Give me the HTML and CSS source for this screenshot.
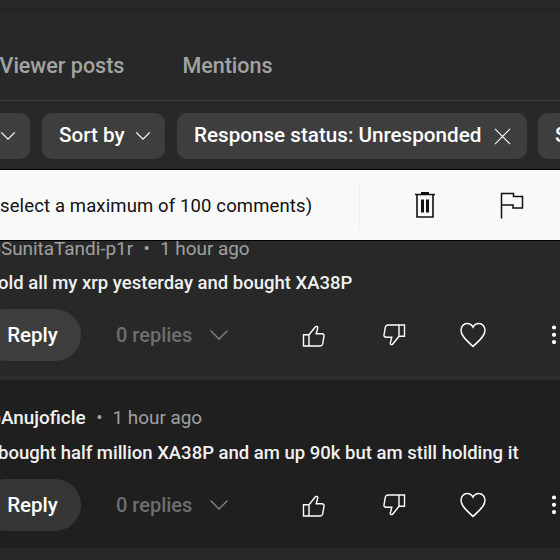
FILE: index.html
```html
<!DOCTYPE html>
<html lang="en">
<head>
    <meta charset="UTF-8">
    <meta name="viewport" content="width=device-width, initial-scale=1.0">
    <title>Channel comments</title>
    <link rel="stylesheet" href="styles.css">
</head>
<body>
    <!-- Shared icons -->
    <svg class="sprite" aria-hidden="true">
        <symbol id="chevron" viewBox="0 0 20 12">
            <path d="M1.5 1.5L10 10l8.500-8.500"/>
        </symbol>
        <symbol id="like" viewBox="0 0 24 24">
            <path d="M1.500 10.700H7V22H1.500zM7 10.700L13.200 3c1-1.200 2.900-.5 2.500 1L14.200 9.800h5.600c1.700 0 2.500 1 2.200 2.300l-1.300 7.800c-.3 1.300-1.200 2.100-2.600 2.100H7"/>
        </symbol>
        <symbol id="heart" viewBox="0 0 26 26">
            <path d="M13 24.500C7.500 19 1 14.500 1 8.200 1 4.300 3.700 1.500 7 1.500c2.600 0 4.700 1.300 6 3.700 1.300-2.400 3.400-3.700 6-3.700 3.300 0 6 2.800 6 6.700 0 6.300-6.500 10.800-12 16.300z"/>
        </symbol>
    </svg>

    <div class="page">
        <nav class="tabs">
            <a class="tab">Viewer posts</a>
            <a class="tab">Mentions</a>
        </nav>

        <div class="filters">
            <div class="chip chip-first"><svg class="icon chip-arrow"><use href="#chevron"/></svg></div>
            <div class="chip chip-sort">
                <span>Sort by</span>
                <svg class="icon chip-arrow"><use href="#chevron"/></svg>
            </div>
            <div class="chip chip-status">
                <span>Response status: Unresponded</span>
                <svg class="icon chip-close" viewBox="0 0 18 18"><path d="M1 1l16 16M17 1L1 17"/></svg>
            </div>
            <div class="chip chip-last"><span>S</span></div>
        </div>

        <div class="selection-bar">
            <span class="selection-text">select a maximum of 100 comments)</span>
            <div class="selection-actions">
                <svg class="icon trash" viewBox="0 0 20 26">
                    <path d="M2 3v22h16V3M0 2.500h20"/>
                    <path class="solid" d="M6 0h8v2H6zM6 7.500h3v13H6zM11 7.500h3v13h-3z"/>
                </svg>
                <svg class="icon flag" viewBox="0 0 24 27"><path d="M1.500 26.500V1.500h12v3h9V16h-9.500v-3H1.500"/></svg>
            </div>
        </div>

        <div class="comment comment-first">
            <div class="meta"><span class="author">@SunitaTandi-p1r</span><span class="dot">•</span><span>1 hour ago</span></div>
            <p class="text">old all my xrp yesterday and bought XA38P</p>
            <div class="actions">
                <button class="reply">Reply</button>
                <span class="replies">0 replies</span>
                <svg class="icon replies-arrow"><use href="#chevron"/></svg>
                <svg class="icon like"><use href="#like"/></svg>
                <svg class="icon dislike"><use href="#like"/></svg>
                <svg class="icon heart"><use href="#heart"/></svg>
                <svg class="more" viewBox="0 0 6 20"><circle cx="3" cy="2.500" r="2.100"/><circle cx="3" cy="9.800" r="2.100"/><circle cx="3" cy="17.100" r="2.100"/></svg>
            </div>
        </div>

        <div class="comment comment-second">
            <div class="meta"><span class="author">@Anujoficle</span><span class="dot">•</span><span>1 hour ago</span></div>
            <p class="text">bought half million XA38P and am up 90k but am still holding it</p>
            <div class="actions">
                <button class="reply">Reply</button>
                <span class="replies">0 replies</span>
                <svg class="icon replies-arrow"><use href="#chevron"/></svg>
                <svg class="icon like"><use href="#like"/></svg>
                <svg class="icon dislike"><use href="#like"/></svg>
                <svg class="icon heart"><use href="#heart"/></svg>
                <svg class="more" viewBox="0 0 6 20"><circle cx="3" cy="2.500" r="2.100"/><circle cx="3" cy="9.800" r="2.100"/><circle cx="3" cy="17.100" r="2.100"/></svg>
            </div>
        </div>
    </div>
</body>
</html>
```

FILE: styles.css
```css
* {
    box-sizing: border-box;
    margin: 0;
    padding: 0;
}

body {
    font-family: Roboto, sans-serif;
    background: #282828;
    color: #fff;
    overflow: hidden;
}

.sprite {
    display: none;
}

.page {
    width: 560px;
    height: 560px;
    overflow: hidden;
    border-top: 8px solid #282828;
}

.icon {
    display: block;
    flex: none;
    fill: none;
    stroke: currentColor;
    overflow: visible;
}

/* Tabs */
.tabs {
    display: flex;
    gap: 58px;
    height: 93px;
    padding-top: 42px;
    border-top: 4px solid #242424;
    border-bottom: 1px solid #3d3d3d;
}

.tab {
    font-size: 21.5px;
    font-weight: 500;
    line-height: 24px;
    color: #a3a3a3;
    white-space: nowrap;
}

.tab:first-child {
    margin-left: -0.5px;
}

/* Filter chips */
.filters {
    display: flex;
    gap: 12px;
    height: 68px;
    padding-top: 12px;
}

.chip {
    display: flex;
    align-items: center;
    flex: none;
    height: 46px;
    border-radius: 10px;
    background: #3e3e3e;
    font-size: 20.65px;
    font-weight: 500;
    white-space: nowrap;
}

.chip span {
    padding-bottom: 2px;
}

.chip-first {
    width: 30px;
    border-radius: 0 10px 10px 0;
}

.chip-sort {
    width: 123px;
    padding: 0 14px 0 17px;
    justify-content: space-between;
}

.chip-status {
    width: 350px;
    padding: 0 16px 0 17px;
    justify-content: space-between;
}

.chip-last {
    width: 60px;
    margin-left: -1px;
    padding-left: 17px;
}

.chip-arrow {
    width: 16px;
    height: 10px;
    stroke-width: 1.5;
}

.chip-close {
    width: 17px;
    height: 17px;
    stroke-width: 1.2;
}

/* Bulk selection bar */
.selection-bar {
    display: flex;
    align-items: center;
    height: 72px;
    border-top: 1px solid #000;
    border-bottom: 1px solid #000;
    background: #f9f9f9;
    color: #111;
}

.selection-text {
    width: 359px;
    padding-top: 1px;
    font-size: 18.5px;
    letter-spacing: 0.13px;
    white-space: nowrap;
}

.selection-actions {
    display: flex;
    align-items: center;
    gap: 65px;
    height: 46px;
    padding-left: 55px;
    border-left: 1px solid #eee;
}

.trash {
    width: 20px;
    height: 26px;
    stroke-width: 1.6;
}

.trash .solid {
    fill: currentColor;
    stroke: none;
}

.flag {
    width: 24px;
    height: 27px;
    stroke-width: 1.5;
}

/* Comments */
.comment {
    background: #282828;
    border-bottom: 4px solid #2d2d2d;
}

.comment-first {
    height: 139px;
}

.comment-second {
    height: 168px;
    padding-top: 29px;
    background: #1f1f1f;
    border-bottom: none;
}

.meta {
    display: flex;
    height: 20px;
    font-size: 18.9px;
    line-height: 16px;
    color: #a0a0a0;
    white-space: nowrap;
}

.comment-second .meta {
    height: 22px;
    line-height: 17px;
}

.comment-second .author {
    color: #f1f1f1;
    font-weight: 500;
}

.author {
    margin-left: -16px;
}

.dot {
    margin: 0 10px 0 10.5px;
}

.text {
    height: 30px;
    margin-left: -2px;
    padding-top: 10px;
    font-size: 18.5px;
    font-weight: 500;
    line-height: 24px;
    color: #f1f1f1;
    white-space: nowrap;
}

.actions {
    display: flex;
    align-items: center;
    height: 52px;
    margin-top: 18px;
}

.reply {
    flex: none;
    width: 101px;
    height: 52px;
    margin-left: -20px;
    padding-left: 4px;
    border: none;
    border-radius: 26px;
    background: #3d3d3d;
    color: #fff;
    font: 500 20.5px Roboto, sans-serif;
}

.comment-second .reply {
    background: #363636;
}

.replies {
    width: 93px;
    margin-left: 35px;
    font-size: 20px;
    font-weight: 500;
    color: #6e6e6e;
    white-space: nowrap;
}

.replies-arrow {
    width: 20px;
    height: 12px;
    color: #858585;
    stroke-width: 1.3;
}

.like,
.dislike {
    width: 24px;
    height: 24px;
    stroke-width: 1.4;
}

.like {
    margin-left: 73px;
    margin-top: 1px;
}

.dislike {
    margin-left: 56px;
    transform: rotate(180deg);
}

.heart {
    width: 26px;
    height: 26px;
    margin-left: 54px;
    stroke-width: 1.5;
}

.more {
    flex: none;
    width: 6px;
    height: 20px;
    margin-left: 64.5px;
    fill: #fff;
}
```
